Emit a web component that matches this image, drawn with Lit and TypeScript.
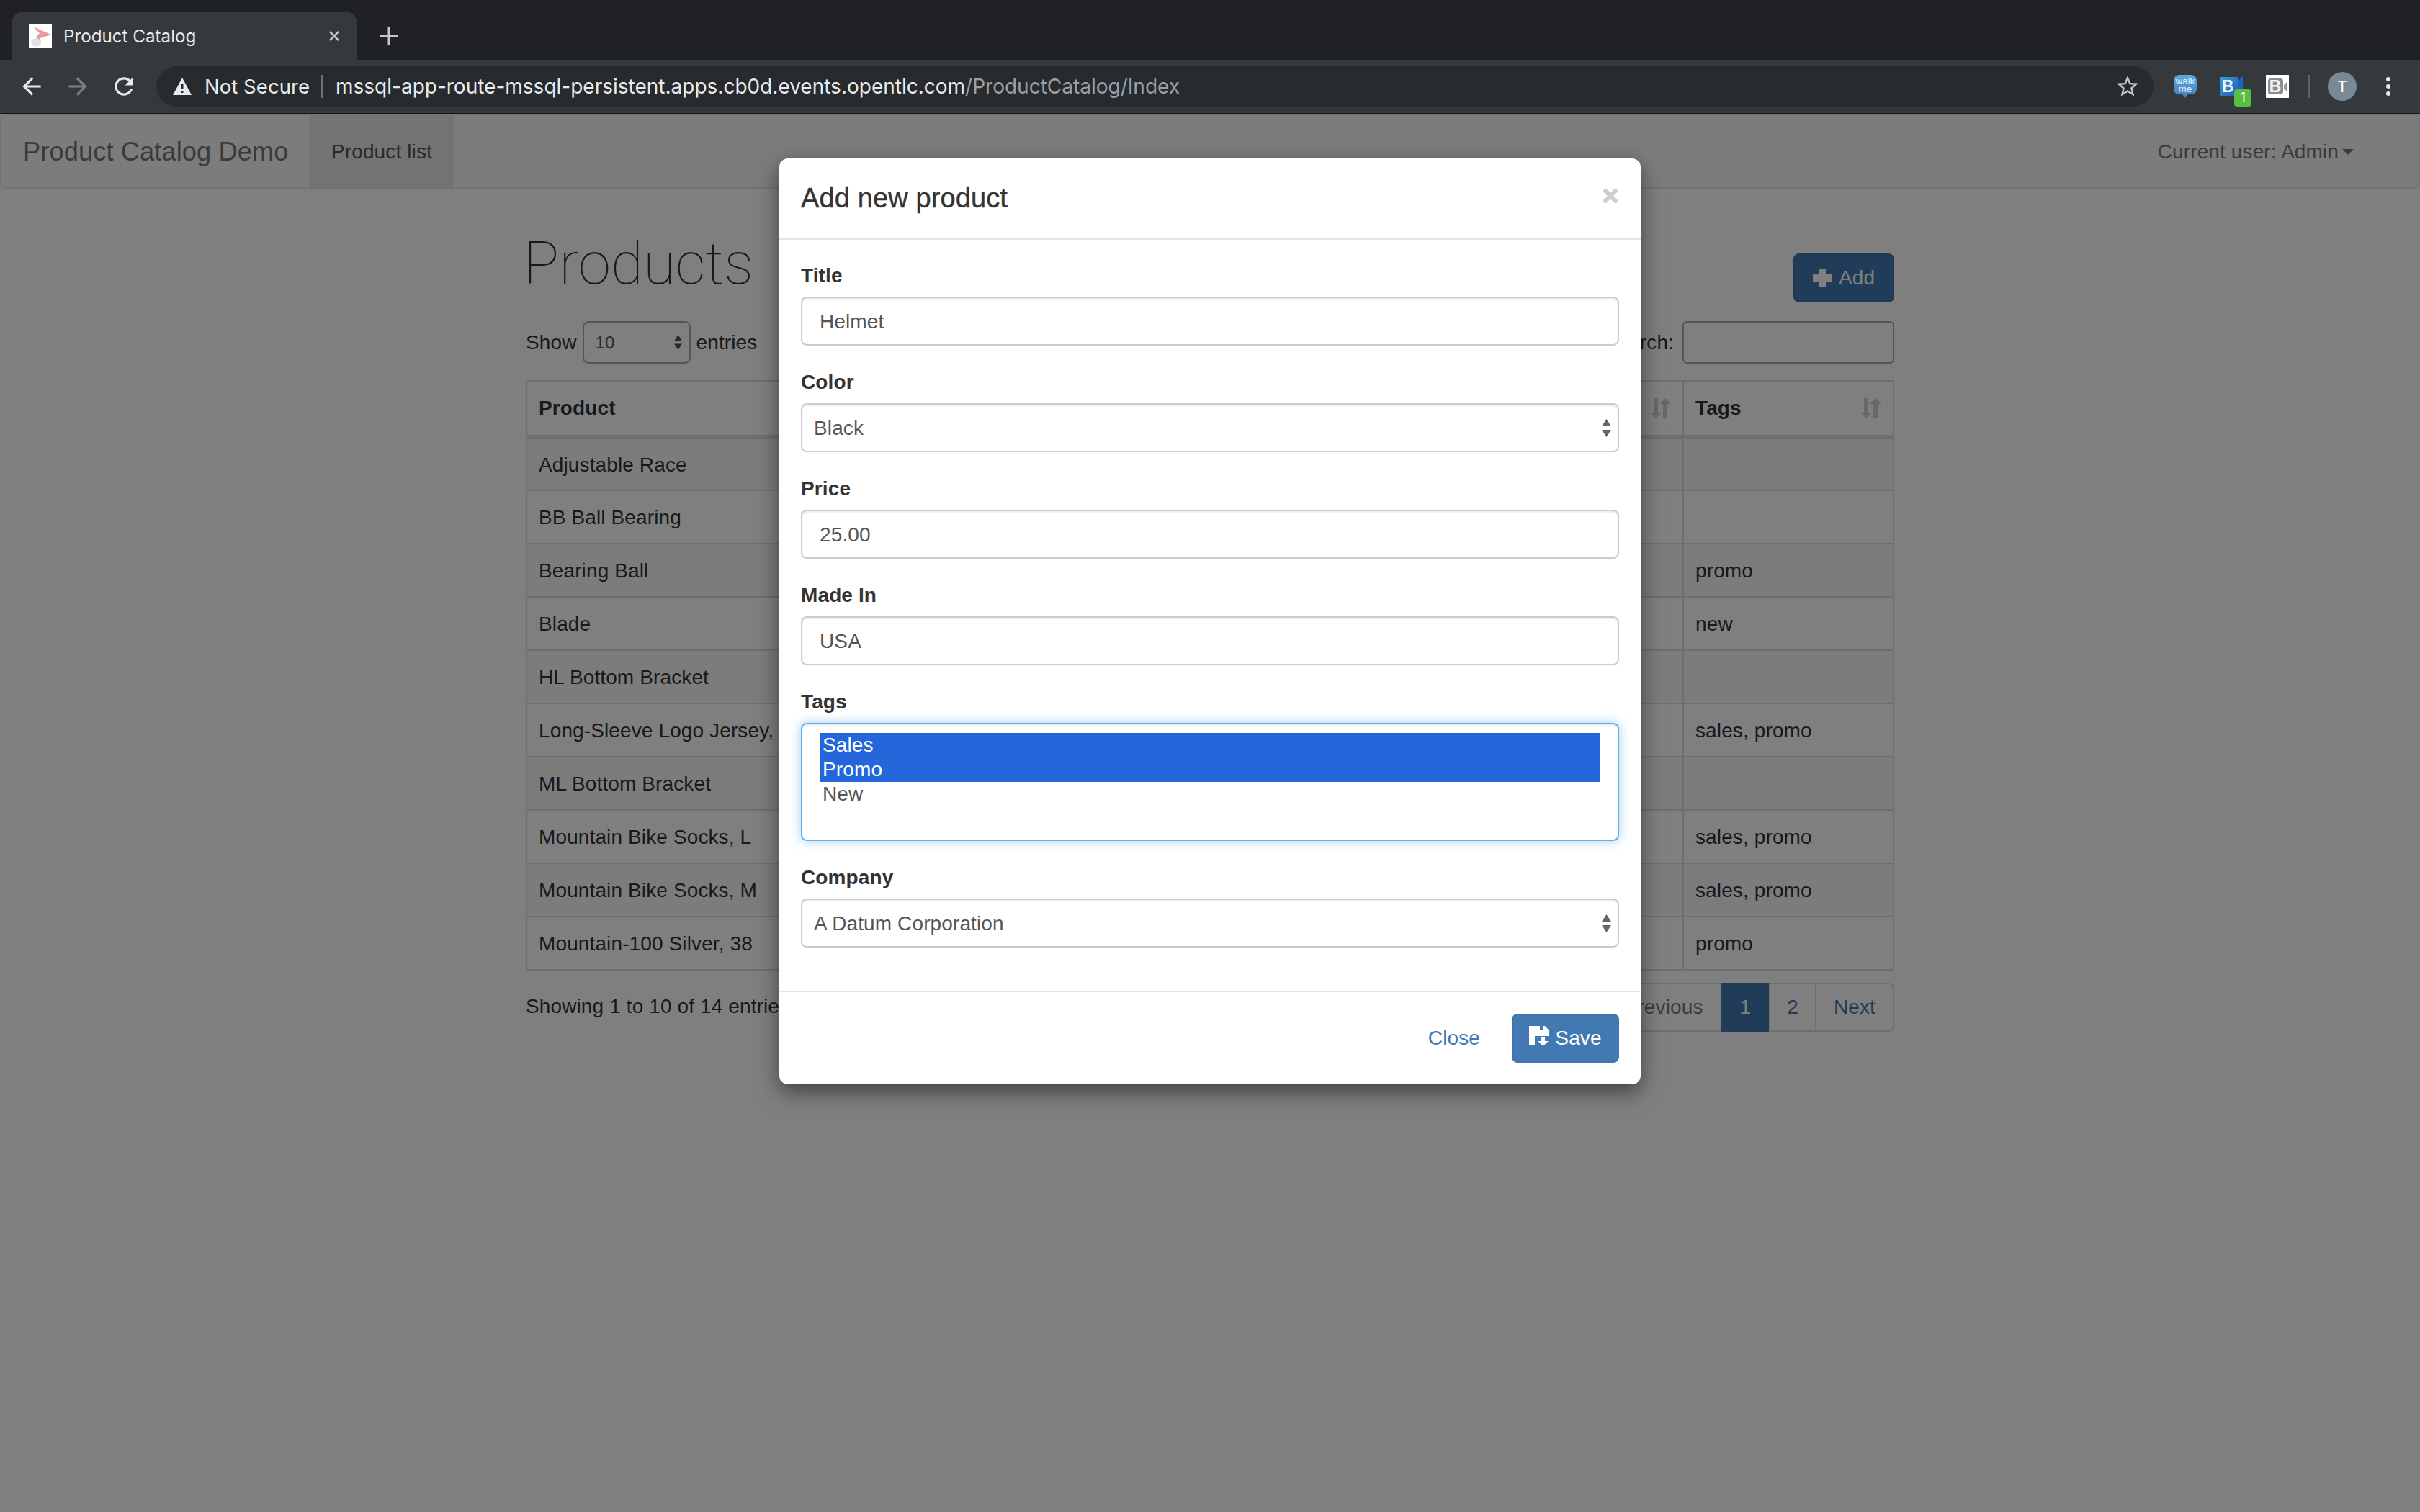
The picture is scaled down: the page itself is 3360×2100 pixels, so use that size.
import { LitElement, html, css, svg } from "lit";
import { customElement } from "lit/decorators.js";

interface Product {
  name: string;
  tags: string;
}

const PRODUCTS: Product[] = [
  { name: "Adjustable Race", tags: "" },
  { name: "BB Ball Bearing", tags: "" },
  { name: "Bearing Ball", tags: "promo" },
  { name: "Blade", tags: "new" },
  { name: "HL Bottom Bracket", tags: "" },
  { name: "Long-Sleeve Logo Jersey, XL", tags: "sales, promo" },
  { name: "ML Bottom Bracket", tags: "" },
  { name: "Mountain Bike Socks, L", tags: "sales, promo" },
  { name: "Mountain Bike Socks, M", tags: "sales, promo" },
  { name: "Mountain-100 Silver, 38", tags: "promo" },
];

const sortIcon = html`<svg class="sort" viewBox="0 0 29 28">
  <path d="M5 0h6v20h5l-8 8-8-8h5z" />
  <path d="M18 28V8h-5l8.500-8 7.500 8h-5v20z" />
</svg>`;

const spinner = html`<svg class="spin" viewBox="0 0 13 25">
  <path d="M6.500 0L13 10H0z" /><path d="M6.500 25L13 15H0z" />
</svg>`;

@customElement("app-root")
export class AppRoot extends LitElement {
  static styles = css`
    :host {
      display: block;
      height: 2100px;
      overflow: hidden;
      font-family: "Liberation Sans", Arial, sans-serif;
      font-size: 28px;
      letter-spacing: 0.12px;
      color: #333;
      background: #fff;
    }

    /* browser chrome */
    .tabstrip {
      height: 84px;
      box-sizing: border-box;
      padding: 16px 0 0 16px;
      background: #202124;
      display: flex;
      font-family: Inter, sans-serif;
      letter-spacing: 0;
    }
    .tab {
      width: 480px;
      height: 68px;
      box-sizing: border-box;
      padding: 0 24px;
      background: #35393c;
      border-radius: 16px 16px 0 0;
      display: flex;
      align-items: center;
      color: #e8eaed;
      font-size: 24.200px;
    }
    .favicon {
      width: 32px;
      height: 32px;
      margin-right: 16px;
    }
    .tab-title {
      flex: 1;
    }
    .tab-close {
      width: 16px;
      height: 16px;
      stroke: #c4c7ca;
      stroke-width: 2.500;
    }
    .new-tab {
      width: 24px;
      height: 24px;
      margin: 22px 0 0 32px;
      stroke: #c4c7ca;
      stroke-width: 3;
    }
    .toolbar {
      height: 74px;
      box-sizing: border-box;
      background: #35393c;
      border-bottom: 1px solid #16171a;
      padding: 8px 12px 9px;
      display: flex;
      align-items: stretch;
      font-family: Inter, sans-serif;
      letter-spacing: 0;
    }
    .slot {
      width: 64px;
      position: relative;
      display: flex;
      align-items: center;
      justify-content: center;
      flex: none;
    }
    .material {
      width: 38px;
      height: 38px;
      fill: #e8eaed;
    }
    .dimmed {
      fill: #7c8084;
    }
    .omnibox {
      flex: 1;
      margin: 0 12px 0 13px;
      background: #282b2e;
      border-radius: 28px;
      padding: 0 20px 0 23px;
      display: flex;
      align-items: center;
      font-size: 27.600px;
      color: #e8eaed;
    }
    .warn {
      width: 26px;
      height: 24px;
      fill: #e8eaed;
      margin-right: 18px;
    }
    .omni-sep {
      width: 2px;
      height: 32px;
      background: #6e7276;
      margin: 0 18px 0 16px;
    }
    .url {
      flex: 1;
      white-space: nowrap;
      font-size: 28px;
    }
    .url span {
      color: #9aa0a6;
    }
    .star {
      width: 36px;
      height: 36px;
      fill: #c4c7ca;
      margin-right: -2px;
    }
    .ext {
      width: 32px;
      height: 32px;
    }
    .badge {
      position: absolute;
      left: 36px;
      top: 32px;
      width: 24px;
      height: 24px;
      border-radius: 4px;
      background: #58bd40;
      color: #fff;
      font-size: 19px;
      line-height: 24px;
      text-align: center;
    }
    .bar-sep {
      width: 2px;
      height: 32px;
      align-self: center;
      background: #5f6367;
      margin: 0 13px 0 11px;
      flex: none;
    }
    .avatar {
      width: 40px;
      height: 40px;
      border-radius: 50%;
      background: #788a98;
      color: #fff;
      font-size: 22px;
      line-height: 40px;
      text-align: center;
    }
    .dots {
      width: 6px;
      height: 26px;
      fill: #e8eaed;
    }

    /* page under the modal */
    .page {
      position: relative;
      height: 1942px;
    }
    .navbar {
      height: 104px;
      box-sizing: border-box;
      background: #f8f8f8;
      border: 2px solid #e7e7e7;
      border-radius: 8px;
      display: flex;
      align-items: stretch;
      color: #777;
    }
    .brand {
      font-size: 36.200px;
      padding: 1px 0 0 30px;
      width: 398px;
      display: flex;
      align-items: center;
    }
    .nav-active {
      background: #e7e7e7;
      color: #555;
      padding: 1px 30px 0;
      display: flex;
      align-items: center;
    }
    .user {
      margin-left: auto;
      margin-right: 90px;
      padding-top: 1px;
      display: flex;
      align-items: center;
      gap: 5px;
    }
    .caret {
      width: 16px;
      height: 8px;
      fill: #777;
    }
    .container {
      width: 1900px;
      margin: 0 auto;
    }
    .title-row {
      height: 184px;
      display: flex;
      justify-content: space-between;
      align-items: flex-start;
    }
    h1 {
      margin: 58px 0 0 -3px;
      font-family: Roboto, sans-serif;
      font-weight: 100;
      font-size: 82px;
      line-height: 92px;
      letter-spacing: 0;
      color: #333;
    }
    .btn {
      height: 68px;
      box-sizing: border-box;
      border: 2px solid #3f74ab;
      border-radius: 8px;
      background: #4379b2;
      color: #fff;
      display: flex;
      align-items: center;
      justify-content: center;
    }
    .add {
      width: 140px;
      margin-top: 90px;
      gap: 10px;
    }
    .plus {
      width: 26px;
      height: 26px;
      fill: #fff;
    }
    .tools {
      height: 59px;
      display: flex;
      justify-content: space-between;
      align-items: center;
      margin-bottom: 23px;
    }
    .show {
      display: flex;
      align-items: center;
      gap: 8px;
    }
    .mini-select {
      width: 150px;
      height: 59px;
      box-sizing: border-box;
      border: 2px solid #aaa;
      border-radius: 8px;
      padding: 0 10px 0 16px;
      display: flex;
      align-items: center;
      justify-content: space-between;
      font-size: 24px;
      color: #555;
    }
    .mini-select .spin {
      width: 11px;
      height: 21px;
      fill: #555;
    }
    .search {
      display: flex;
      align-items: center;
      gap: 12px;
    }
    .search-box {
      width: 294px;
      height: 59px;
      box-sizing: border-box;
      border: 2px solid #aaa;
      border-radius: 6px;
    }
    table {
      width: 100%;
      table-layout: fixed;
      border-collapse: collapse;
      border: 2px solid #ddd;
    }
    .col-tags {
      width: 292px;
    }
    .col-product {
      width: 700px;
    }
    th,
    td {
      box-sizing: border-box;
      height: 74px;
      padding: 1px 16px 0;
      border: 2px solid #ddd;
      text-align: left;
      white-space: nowrap;
      overflow: hidden;
    }
    th {
      height: 78px;
      padding-top: 0;
      border-bottom-width: 6px;
    }
    .th-inner {
      display: flex;
      justify-content: space-between;
      align-items: center;
    }
    .sort {
      width: 29px;
      height: 28px;
      fill: #d0d0d0;
    }
    tbody tr:nth-child(odd) {
      background: #f9f9f9;
    }
    .info-row {
      margin-top: 17px;
      display: flex;
      justify-content: space-between;
      align-items: center;
    }
    .info-row > span {
      margin-top: -2px;
    }
    .pager {
      height: 68px;
      box-sizing: border-box;
      display: flex;
      align-items: stretch;
      border: 2px solid #ddd;
      border-radius: 8px;
      color: #4379b2;
    }
    .pager div {
      display: flex;
      align-items: center;
      padding: 0 24px;
      border-left: 2px solid #ddd;
    }
    .pager div:first-child {
      border-left: 0;
      color: #777;
    }
    .pager .current {
      background: #4379b2;
      border-color: #4379b2;
      color: #fff;
      margin: -2px 0;
      padding: 0 25px;
    }
    .pager .current + div {
      padding: 0 23px;
    }

    /* modal */
    .backdrop {
      position: absolute;
      inset: 0;
      background: rgba(0, 0, 0, 0.5);
      display: flex;
      justify-content: center;
      align-items: flex-start;
      padding-top: 62px;
    }
    .modal {
      width: 1196px;
      box-sizing: border-box;
      background: #fff;
      border-radius: 12px;
      box-shadow: 0 10px 30px rgba(0, 0, 0, 0.5);
    }
    .modal-head {
      display: flex;
      justify-content: space-between;
      align-items: center;
      padding: 30px;
      border-bottom: 2px solid #e5e5e5;
    }
    .modal-title {
      font-size: 38px;
      line-height: 51px;
      -webkit-text-stroke: 0.4px #333;
    }
    .modal-x {
      width: 20px;
      height: 20px;
      margin: -8px 2px 0 0;
      stroke: #cfcfcf;
      stroke-width: 6;
    }
    .modal-body {
      padding: 29px 30px 30px;
    }
    .group {
      margin-bottom: 30px;
    }
    .group label {
      display: block;
      font-weight: bold;
      line-height: 41px;
      margin-bottom: 9px;
    }
    .control {
      height: 68px;
      box-sizing: border-box;
      border: 2px solid #ccc;
      border-radius: 8px;
      box-shadow: inset 0 2px 2px rgba(0, 0, 0, 0.075);
      padding: 1px 24px 0;
      display: flex;
      align-items: center;
      justify-content: space-between;
      color: #555;
    }
    .control.select {
      padding: 1px 9px 0 16px;
    }
    .control .spin {
      width: 13px;
      height: 25px;
      fill: #666;
    }
    .listbox {
      height: 164px;
      box-sizing: border-box;
      border: 2px solid #66afe9;
      border-radius: 8px;
      box-shadow: inset 0 2px 2px rgba(0, 0, 0, 0.075), 0 0 16px rgba(102, 175, 233, 0.6);
      padding: 12px 24px;
      color: #555;
      line-height: 34px;
    }
    .option {
      height: 34px;
      padding-left: 4px;
    }
    .option.on {
      background: #2567da;
      color: #fff;
    }
    .modal-foot {
      border-top: 2px solid #e5e5e5;
      padding: 30px;
      display: flex;
      justify-content: flex-end;
      align-items: center;
      gap: 44px;
    }
    .link {
      color: #4379b2;
    }
    .save {
      width: 149px;
      gap: 8px;
    }
    .floppy {
      width: 28px;
      height: 28px;
      fill: #fff;
      margin-top: -6px;
    }
  `;

  private renderChrome() {
    return html`
      <div class="tabstrip">
        <div class="tab">
          <svg class="favicon" viewBox="0 0 32 32">
            <rect width="32" height="32" fill="#fff" />
            <path d="M6 3l25 11-15 5 1 8-7-10 5-5z" fill="#e99a9c" />
            <ellipse cx="10" cy="25" rx="7" ry="6" fill="#dfe2e8" />
          </svg>
          <span class="tab-title">Product Catalog</span>
          <svg class="tab-close" viewBox="0 0 16 16"><path d="M2 2l12 12M14 2L2 14" /></svg>
        </div>
        <svg class="new-tab" viewBox="0 0 24 24"><path d="M12 0v24M0 12h24" /></svg>
      </div>
      <div class="toolbar">
        <div class="slot">
          <svg class="material" viewBox="0 0 24 24">
            <path d="M20 11H7.830l5.590-5.590L12 4l-8 8 8 8 1.410-1.410L7.830 13H20v-2z" />
          </svg>
        </div>
        <div class="slot">
          <svg class="material dimmed" viewBox="0 0 24 24">
            <path d="M4 11h12.170l-5.590-5.590L12 4l8 8-8 8-1.410-1.410L16.170 13H4v-2z" />
          </svg>
        </div>
        <div class="slot">
          <svg class="material" viewBox="0 0 24 24">
            <path
              d="M17.650 6.350C16.200 4.900 14.210 4 12 4c-4.420 0-7.990 3.580-7.990 8s3.570 8 7.990 8c3.730 0 6.840-2.550 7.730-6h-2.080c-.82 2.330-3.040 4-5.650 4-3.310 0-6-2.690-6-6s2.690-6 6-6c1.660 0 3.140.69 4.220 1.780L13 11h7V4l-2.350 2.350z"
            />
          </svg>
        </div>
        <div class="omnibox">
          <svg class="warn" viewBox="0 0 26 24">
            <path fill-rule="evenodd" d="M13 0l13 24H0zM11.500 8v8h3V8zM11.500 18v3h3v-3z" />
          </svg>
          <span>Not Secure</span>
          <div class="omni-sep"></div>
          <div class="url">mssql-app-route-mssql-persistent.apps.cb0d.events.opentlc.com<span>/ProductCatalog/Index</span></div>
          <svg class="star" viewBox="0 0 24 24">
            <path
              d="M22 9.240l-7.190-.62L12 2 9.190 8.630 2 9.240l5.460 4.730L5.820 21 12 17.270 18.180 21l-1.630-7.030L22 9.240zM12 15.400l-3.760 2.270 1-4.280-3.320-2.880 4.380-.38L12 6.100l1.710 4.040 4.380.38-3.320 2.880 1 4.280L12 15.400z"
            />
          </svg>
        </div>
        ${this.renderExtensions()}
        <div class="bar-sep"></div>
        <div class="slot"><div class="avatar">T</div></div>
        <div class="slot">
          <svg class="dots" viewBox="0 0 6 26">
            <circle cx="3" cy="3" r="3" /><circle cx="3" cy="13" r="3" /><circle cx="3" cy="23" r="3" />
          </svg>
        </div>
      </div>
    `;
  }

  private renderExtensions() {
    return html`
      <div class="slot">
        <svg class="ext" viewBox="0 0 32 32">
          <defs>
            <linearGradient id="wm" x1="0" y1="0" x2="0" y2="1">
              <stop offset="0" stop-color="#62a8dc" />
              <stop offset="1" stop-color="#3f7fc0" />
            </linearGradient>
          </defs>
          <path d="M8 0h16a8 8 0 0 1 8 8v12a7 7 0 0 1-7 7h-5l-4 5-4-5H7a7 7 0 0 1-7-7V8a8 8 0 0 1 8-8z" fill="url(#wm)" />
          ${svg`<text x="16" y="13" text-anchor="middle" font-size="13.500" fill="#e6f2fb" font-family="Liberation Sans">walk</text>
          <text x="16" y="24" text-anchor="middle" font-size="13.500" fill="#e6f2fb" font-family="Liberation Sans">me</text>`}
        </svg>
      </div>
      <div class="slot">
        <svg class="ext" viewBox="0 0 32 32">
          <defs>
            <linearGradient id="bl" x1="0" y1="0" x2="1" y2="1">
              <stop offset="0" stop-color="#3c9ae0" />
              <stop offset="1" stop-color="#1c5fb0" />
            </linearGradient>
          </defs>
          <path d="M25 8l7-6v26h-7z" fill="#1d62bd" />
          <rect y="3" width="25" height="26" fill="url(#bl)" />
          ${svg`<text x="11" y="24" text-anchor="middle" font-size="23" font-weight="bold" fill="#e8f3fc" font-family="Liberation Sans">B</text>`}
        </svg>
        <div class="badge">1</div>
      </div>
      <div class="slot">
        <svg class="ext" viewBox="0 0 32 32">
          <rect width="32" height="32" fill="#fff" />
          <rect x="3" y="5" width="21" height="22" rx="4" fill="#8c8c8c" />
          <path d="M25 14l5-5v15l-5-5z" fill="#9a9a9a" />
          ${svg`<text x="13" y="24" text-anchor="middle" font-size="23" font-weight="bold" fill="#f2f2f2" font-family="Liberation Sans">B</text>`}
        </svg>
      </div>
    `;
  }

  private renderPage() {
    return html`
      <div class="navbar">
        <div class="brand">Product Catalog Demo</div>
        <div class="nav-active">Product list</div>
        <div class="user">
          Current user: Admin
          <svg class="caret" viewBox="0 0 16 8"><path d="M0 0h16L8 8z" /></svg>
        </div>
      </div>
      <div class="container">
        <div class="title-row">
          <h1>Products</h1>
          <div class="btn add">
            <svg class="plus" viewBox="0 0 26 26"><path d="M8 0h10v8h8v10h-8v8H8v-8H0V8h8z" /></svg>
            Add
          </div>
        </div>
        <div class="tools">
          <div class="show">
            Show
            <div class="mini-select">10 ${spinner}</div>
            entries
          </div>
          <div class="search">
            Search:
            <div class="search-box"></div>
          </div>
        </div>
        <table>
          <colgroup>
            <col class="col-product" />
            <col />
            <col class="col-tags" />
          </colgroup>
          <thead>
            <tr>
              <th><div class="th-inner">Product ${sortIcon}</div></th>
              <th><div class="th-inner"><span></span> ${sortIcon}</div></th>
              <th><div class="th-inner">Tags ${sortIcon}</div></th>
            </tr>
          </thead>
          <tbody>
            ${PRODUCTS.map(
              (p) => html`
                <tr>
                  <td>${p.name}</td>
                  <td></td>
                  <td>${p.tags}</td>
                </tr>
              `
            )}
          </tbody>
        </table>
        <div class="info-row">
          <span>Showing 1 to 10 of 14 entries</span>
          <div class="pager">
            <div>Previous</div>
            <div class="current">1</div>
            <div>2</div>
            <div>Next</div>
          </div>
        </div>
      </div>
    `;
  }

  private renderField(label: string, value: string, select = false) {
    return html`
      <div class="group">
        <label>${label}</label>
        <div class="control ${select ? "select" : ""}">
          <span>${value}</span>
          ${select ? spinner : ""}
        </div>
      </div>
    `;
  }

  private renderModal() {
    return html`
      <div class="backdrop">
        <div class="modal">
          <div class="modal-head">
            <div class="modal-title">Add new product</div>
            <svg class="modal-x" viewBox="0 0 20 20"><path d="M1 1l18 18M19 1L1 19" /></svg>
          </div>
          <div class="modal-body">
            ${this.renderField("Title", "Helmet")}
            ${this.renderField("Color", "Black", true)}
            ${this.renderField("Price", "25.00")}
            ${this.renderField("Made In", "USA")}
            <div class="group">
              <label>Tags</label>
              <div class="listbox">
                <div class="option on">Sales</div>
                <div class="option on">Promo</div>
                <div class="option">New</div>
              </div>
            </div>
            ${this.renderField("Company", "A Datum Corporation", true)}
          </div>
          <div class="modal-foot">
            <span class="link">Close</span>
            <div class="btn save">
              <svg class="floppy" viewBox="0 0 28 28">
                <path d="M0 0h15v6h4V0h3l5 5v9H8v13H0z" />
                <path d="M17 15h5v6h5l-7.500 7L12 21h5z" />
              </svg>
              Save
            </div>
          </div>
        </div>
      </div>
    `;
  }

  render() {
    return html`
      ${this.renderChrome()}
      <div class="page">${this.renderPage()} ${this.renderModal()}</div>
    `;
  }
}
